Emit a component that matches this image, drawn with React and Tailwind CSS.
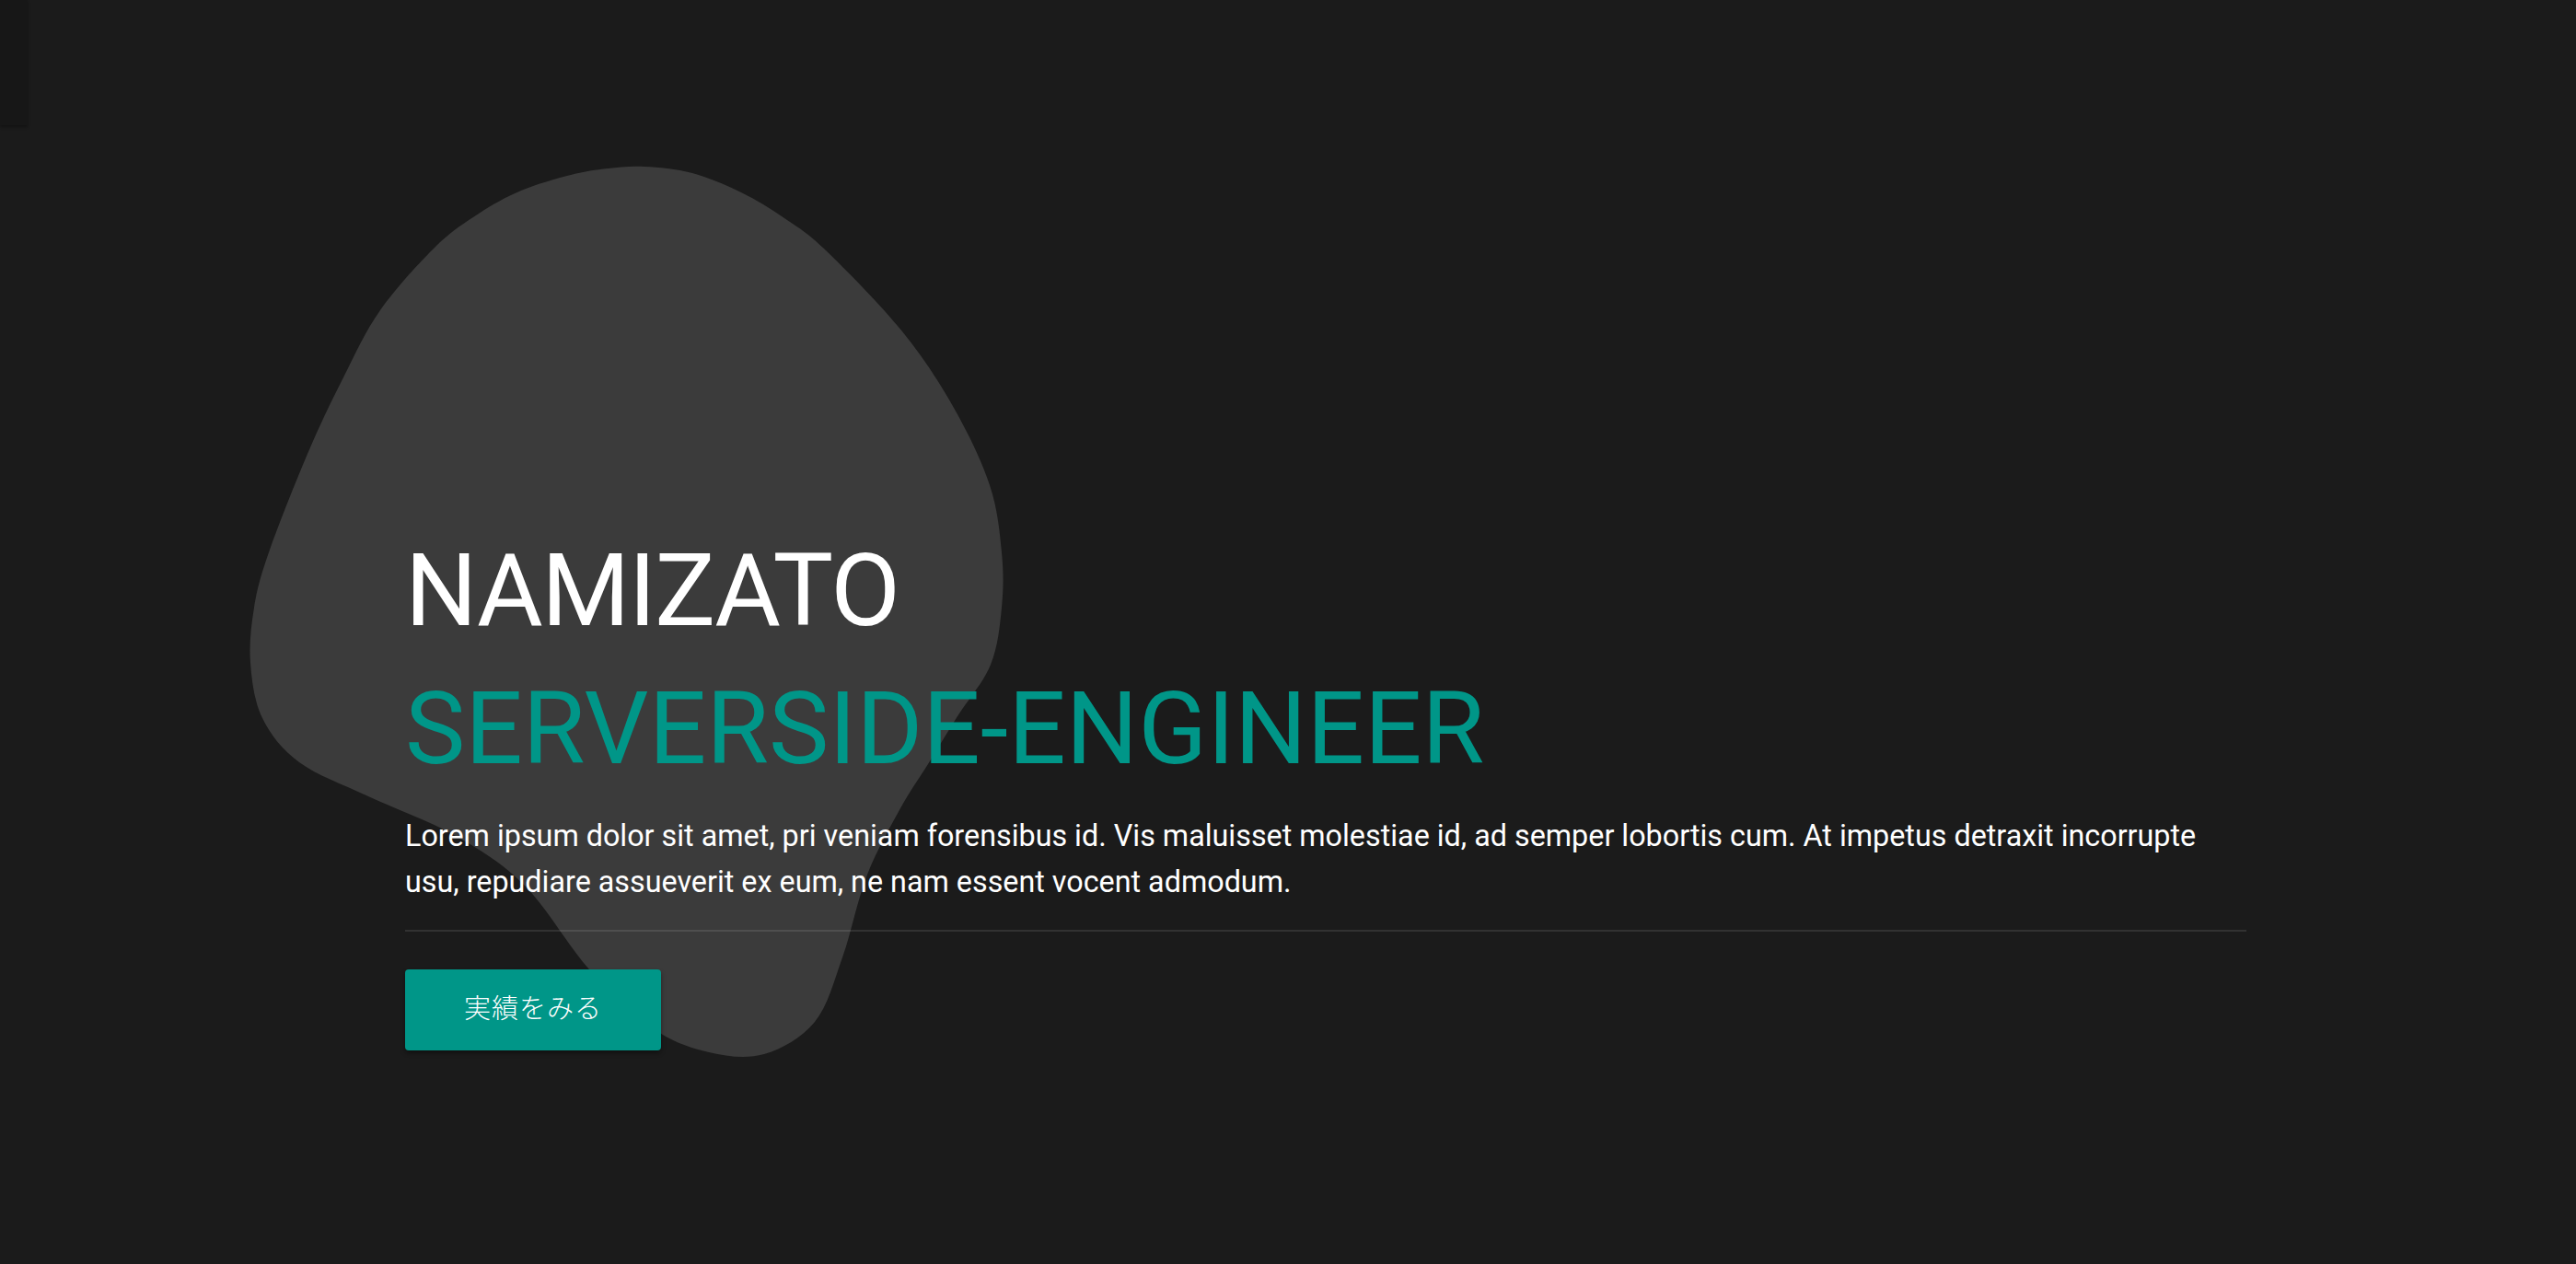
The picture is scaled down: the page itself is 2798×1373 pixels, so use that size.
import React from "react";

// outline of the background blob, page coordinates
const BLOB = [
  [700, 181], [752, 188], [805, 209], [852, 237], [897, 272], [980, 360],
  [1036, 443], [1075, 527], [1088, 600], [1088, 660], [1076, 722], [1040, 778],
  [1008, 830], [978, 878], [942, 950], [915, 1040], [885, 1110], [830, 1145],
  [770, 1143], [709, 1117], [640, 1053], [570, 962], [495, 908], [400, 865],
  [325, 828], [285, 780], [272, 720], [276, 660], [292, 600], [334, 493],
  [373, 410], [413, 337], [474, 267], [520, 232], [566, 207], [620, 190],
  [660, 183],
];

function smoothPath(pts) {
  const n = pts.length;
  let d = `M${pts[0][0]} ${pts[0][1]}`;
  for (let i = 0; i < n; i++) {
    const p0 = pts[(i - 1 + n) % n];
    const p1 = pts[i];
    const p2 = pts[(i + 1) % n];
    const p3 = pts[(i + 2) % n];
    const c1x = p1[0] + (p2[0] - p0[0]) / 6;
    const c1y = p1[1] + (p2[1] - p0[1]) / 6;
    const c2x = p2[0] - (p3[0] - p1[0]) / 6;
    const c2y = p2[1] - (p3[1] - p1[1]) / 6;
    d += ` C${c1x} ${c1y} ${c2x} ${c2y} ${p2[0]} ${p2[1]}`;
  }
  return d + " Z";
}

export default function App() {
  return (
    <div
      className="relative h-[1373px] w-full overflow-hidden bg-[#1b1b1b] text-white"
      style={{ fontFamily: 'Roboto, "Noto Sans CJK JP", sans-serif' }}
    >
      <div className="absolute left-0 top-0 h-[136px] w-[30px] bg-[#171717] shadow-[0_2px_3px_rgba(0,0,0,0.35)]" />

      <svg
        className="absolute left-[260px] top-[170px]"
        width="840"
        height="990"
        viewBox="260 170 840 990"
      >
        <path d={smoothPath(BLOB)} fill="#3b3b3b" />
      </svg>

      <div className="relative w-[2440px] pl-[440px] pt-[587px]">
        <h1 className="text-[110px] font-normal leading-none tracking-[-1.5px]">
          NAMIZATO
        </h1>
        <h2 className="mt-[40px] text-[110px] font-normal leading-none text-[#009688]">
          SERVERSIDE-ENGINEER
        </h2>
        <p className="mt-[36px] pr-[40px] text-[32.3px] leading-[50px] text-white">
          Lorem ipsum dolor sit amet, pri veniam forensibus id. Vis maluisset
          molestiae id, ad semper lobortis cum. At impetus detraxit incorrupte
          usu, repudiare assueverit ex eum, ne nam essent vocent admodum.
        </p>
        <div className="mt-[27px] h-[2px] bg-white/10" />
        <button className="mt-[41px] flex h-[88px] w-[278px] items-center justify-center rounded bg-[#009688] text-[29px] font-light tracking-[1px] text-white shadow-[0_3px_5px_rgba(0,0,0,0.4)]">
          実績をみる
        </button>
      </div>
    </div>
  );
}
